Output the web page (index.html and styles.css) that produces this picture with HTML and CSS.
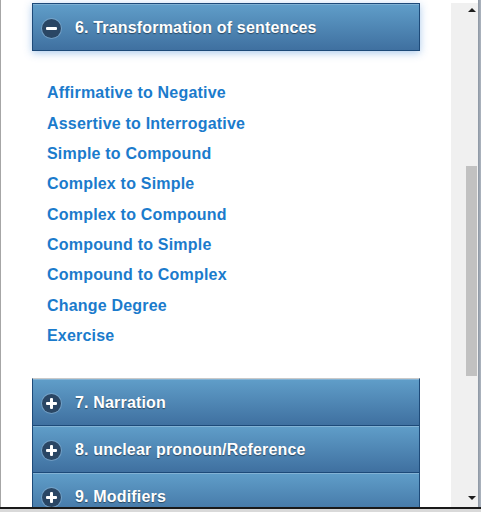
FILE: index.html
```html
<!DOCTYPE html>
<html lang="en">
<head>
<meta charset="utf-8">
<title>Transformation of sentences</title>
<link rel="stylesheet" href="styles.css">
</head>
<body>
<div class="window">
  <div class="viewport">
    <div class="content">
      <div class="header active">
        <span class="icon minus"></span>
        <span class="title">6. Transformation of sentences</span>
      </div>
      <ul class="links">
        <li><a href="#">Affirmative to Negative</a></li>
        <li><a href="#">Assertive to Interrogative</a></li>
        <li><a href="#">Simple to Compound</a></li>
        <li><a href="#">Complex to Simple</a></li>
        <li><a href="#">Complex to Compound</a></li>
        <li><a href="#">Compound to Simple</a></li>
        <li><a href="#">Compound to Complex</a></li>
        <li><a href="#">Change Degree</a></li>
        <li><a href="#">Exercise</a></li>
      </ul>
      <div class="group">
        <div class="header">
          <span class="icon plus"></span>
          <span class="title">7. Narration</span>
        </div>
        <div class="header">
          <span class="icon plus"></span>
          <span class="title">8. unclear pronoun/Reference</span>
        </div>
        <div class="header">
          <span class="icon plus"></span>
          <span class="title">9. Modifiers</span>
        </div>
      </div>
    </div>
    <div class="scrollbar">
      <div class="arrow up"></div>
      <div class="track"><div class="thumb"></div></div>
      <div class="arrow down"></div>
    </div>
    <div class="edge"></div>
  </div>
  <div class="bottom"></div>
</div>
</body>
</html>
```

FILE: styles.css
```css
* { box-sizing: border-box; }
html, body { margin: 0; padding: 0; background: #ffffff; }
body { font-family: "Liberation Sans", Arial, sans-serif; }

.window {
  width: 481px;
  height: 512px;
  display: flex;
  flex-direction: column;
  overflow: hidden;
}

.viewport {
  display: flex;
  height: 507px;
  border-left: 1px solid #a6a6a6;
}

.content {
  flex: 1;
  overflow: hidden;
  padding: 3px 31px 0 31px;
  background: #ffffff;
}

.header {
  display: flex;
  align-items: center;
  gap: 14px;
  height: 47px;
  padding: 2px 0 0 9px;
  background: linear-gradient(#609ec9, #3f70a0);
  border-bottom: 1px solid #1d4a79;
  box-shadow: inset 0 1px 0 rgba(255, 255, 255, 0.22);
}

.header.active {
  height: 48px;
  border: 1px solid #1d4a79;
  box-shadow: 0 2px 8px rgba(70, 140, 215, 0.45), inset 0 1px 0 rgba(255, 255, 255, 0.2);
}

.title {
  color: #ffffff;
  font-weight: bold;
  font-size: 16px;
  letter-spacing: 0.17px;
  text-shadow: 0 1px 1px rgba(0, 0, 0, 0.45);
}

.icon {
  position: relative;
  width: 19px;
  height: 19px;
  border-radius: 50%;
  background: #2a4664;
  box-shadow: 0 0 0 1px rgba(150, 185, 215, 0.5);
  flex: none;
}
.icon::before,
.icon::after {
  content: "";
  position: absolute;
  background: #ffffff;
  border-radius: 1px;
}
.icon::before {
  left: 4px;
  top: 8px;
  width: 11px;
  height: 3px;
}
.icon.plus::after {
  left: 8px;
  top: 4px;
  width: 3px;
  height: 11px;
}

.links {
  list-style: none;
  margin: 27px 0 27px 0;
  padding: 0 0 0 15px;
}
.links li {
  line-height: 18px;
  padding: 6.2px 0;
}
.links a {
  color: #1b7bcc;
  font-weight: bold;
  font-size: 16px;
  letter-spacing: 0.2px;
  text-decoration: none;
}

.group {
  border-top: 1px solid #c9c9c9;
  border-left: 1px solid #1d4a79;
  border-right: 1px solid #1d4a79;
}

.scrollbar {
  width: 27px;
  background: #f0f0f0;
  display: flex;
  flex-direction: column;
  margin-top: 3px;
}
.arrow {
  height: 17px;
  position: relative;
}
.arrow::before {
  content: "";
  position: absolute;
  left: 17px;
  width: 0;
  height: 0;
  border-left: 4px solid transparent;
  border-right: 4px solid transparent;
}
.arrow.up::before {
  top: 5px;
  border-bottom: 4px solid #1e1e1e;
}
.arrow.down::before {
  top: 6px;
  border-top: 4px solid #1e1e1e;
}
.track {
  flex: 1;
}
.thumb {
  margin-top: 146px;
  margin-left: 15px;
  width: 11px;
  height: 210px;
  background: #c1c1c1;
}

.edge {
  width: 3px;
  background: linear-gradient(90deg, #8c96a3, #aeb6c0);
}

.bottom {
  height: 5px;
  border-top: 2px solid #1a1a1a;
  background: #d9d9d9;
}
```
